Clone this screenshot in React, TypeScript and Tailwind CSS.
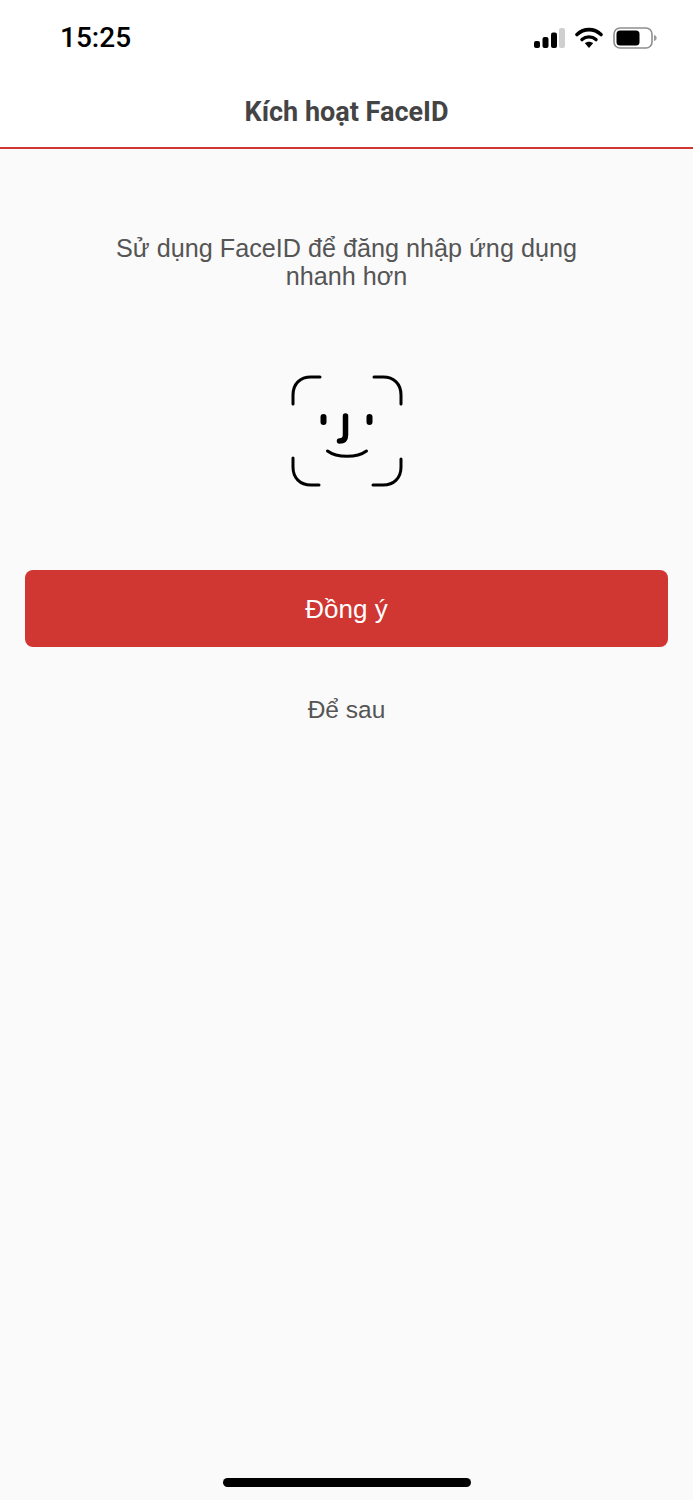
import React from "react";

function SignalIcon() {
  return (
    <svg width="32" height="22" viewBox="0 0 32 22" className="block">
      <rect x="1" y="14" width="6" height="7" rx="2" fill="#000" />
      <rect x="9.5" y="10" width="6" height="11" rx="2" fill="#000" />
      <rect x="18" y="5.5" width="6" height="15.5" rx="2" fill="#000" />
      <rect x="26" y="1" width="6" height="20" rx="2" fill="#cfcfcf" />
    </svg>
  );
}

function WifiIcon() {
  return (
    <svg width="28" height="22" viewBox="0 0 28 22" className="block">
      <path d="M2 7.5C9 1 19 1 26 7.5" fill="none" stroke="#000" strokeWidth="3.6" strokeLinecap="round" />
      <path d="M7 12.6C11 9 17 9 21 12.6" fill="none" stroke="#000" strokeWidth="3.4" strokeLinecap="round" />
      <path d="M9.9 16.2C12.2 14.2 15.8 14.2 18.1 16.2L14 21Z" fill="#000" />
    </svg>
  );
}

function BatteryIcon() {
  return (
    <svg width="44" height="22" viewBox="0 0 44 22" className="block">
      <rect x="1" y="1" width="38" height="20" rx="6" fill="none" stroke="#8e8e8e" strokeWidth="1.6" />
      <rect x="3.5" y="3.5" width="23" height="15" rx="3.5" fill="#000" />
      <path d="M41 8C43 8.6 43.6 9.6 43.6 11C43.6 12.4 43 13.4 41 14Z" fill="#9a9a9a" />
    </svg>
  );
}

// Face ID glyph: four corner brackets, eyes, nose and smile
function FaceIdIcon() {
  return (
    <svg width="112" height="112" viewBox="0 0 112 112" fill="none" stroke="#000" strokeLinecap="round" className="block">
      <g strokeWidth="3">
        <path d="M2 29V20C2 9 9 2 20 2H29" />
        <path d="M83 2H92C103 2 110 9 110 20V29" />
        <path d="M2 83V92C2 103 9 110 20 110H28" />
        <path d="M110 84V92C110 103 103 110 92 110H82" />
      </g>
      <path d="M32.5 42V47" strokeWidth="6" />
      <path d="M78.5 42V47" strokeWidth="6" />
      <path d="M54.5 41V60C54.5 64 52.5 66 48.5 66" strokeWidth="5.5" />
      <path d="M36.5 76C46 83 66 83 75.5 76" strokeWidth="3" />
    </svg>
  );
}

export default function App() {
  return (
    <div className="flex h-[1500px] w-[693px] flex-col overflow-hidden bg-[#fafafa] font-['Liberation_Sans',sans-serif]">
      <header className="h-[149px] border-b-2 border-[#d03632] bg-white">
        <div className="flex h-[76px] items-center justify-between pl-[60px] pr-[36px]">
          <span className="font-['Roboto',sans-serif] text-[28px] font-medium leading-none text-black">15:25</span>
          <div className="flex items-center gap-[10px]">
            <SignalIcon />
            <WifiIcon />
            <BatteryIcon />
          </div>
        </div>
        <h1 className="text-center font-['Roboto',sans-serif] text-[27px] font-bold leading-[72px] text-[#444444]">
          Kích hoạt FaceID
        </h1>
      </header>

      <main className="flex flex-1 flex-col items-center">
        <p className="mt-[85px] w-[480px] text-center text-[25.2px] leading-[28px] text-[#555555]">
          Sử dụng FaceID để đăng nhập ứng dụng nhanh hơn
        </p>
        <div className="mt-[85px]">
          <FaceIdIcon />
        </div>
        <button className="mt-[83px] h-[77px] w-[643px] rounded-[8px] bg-[#d03632] pt-[2px] text-[26px] text-white">
          Đồng ý
        </button>
        <button className="mt-[47px] text-[24.5px] leading-[32px] text-[#555555]">Để sau</button>
        <div className="mb-[13px] mt-auto h-[9px] w-[248px] rounded-full bg-black" />
      </main>
    </div>
  );
}
